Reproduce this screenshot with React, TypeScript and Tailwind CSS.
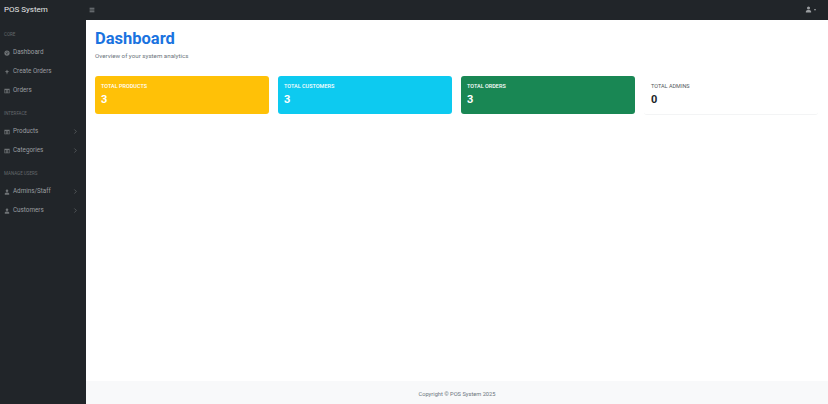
import { ChevronRight, Menu } from "lucide-react";

const font = "font-['Roboto','Noto_Sans',sans-serif]";

function Gauge() {
  return (
    <svg viewBox="0 0 16 16" className="h-[6px] w-[6px] fill-current">
      <path d="M8 1a7 7 0 1 0 0 14A7 7 0 0 0 8 1Zm0 2.5a1 1 0 1 1 0 2 1 1 0 0 1 0-2Zm-3 2a1 1 0 1 1 0 2 1 1 0 0 1 0-2Zm6 0a1 1 0 1 1 0 2 1 1 0 0 1 0-2ZM8 12a2 2 0 0 1-.6-3.9L9.5 6l.6.5-1.5 2.4A2 2 0 0 1 8 12Z" />
    </svg>
  );
}

function Tag() {
  return (
    <svg viewBox="0 0 16 16" className="h-[6px] w-[6px] fill-current">
      <path d="M8 1l1.8 4.2L14 7l-4.2 1.8L8 15 6.2 8.8 2 7l4.2-1.8L8 1Z" />
    </svg>
  );
}

function Table() {
  return (
    <svg viewBox="0 0 16 16" className="h-[6px] w-[6px] fill-current">
      <path d="M1 2h14v12H1V2Zm1.5 3v2.2h3.2V5H2.5Zm4.7 0v2.2h1.6V5H7.2Zm3.1 0v2.2h3.2V5h-3.2Zm-7.8 3.7V12h3.2V8.7H2.5Zm4.7 0V12h1.6V8.7H7.2Zm3.1 0V12h3.2V8.7h-3.2Z" />
    </svg>
  );
}

function User({ className }: { className: string }) {
  return (
    <svg viewBox="0 0 16 16" className={`fill-current ${className}`}>
      <path d="M8 8a3.5 3.5 0 1 0 0-7 3.5 3.5 0 0 0 0 7Zm-5 7c-.8 0-1.2-.5-1.2-1.2C1.8 11 4 9 6 9h4c2 0 4.2 2 4.2 4.8 0 .7-.4 1.2-1.2 1.2H3Z" />
    </svg>
  );
}

function NavItem({ icon, label, arrow }: { icon: React.ReactNode; label: string; arrow?: boolean }) {
  return (
    <div className="flex h-[19px] items-center pl-[4px] pr-[7px] text-[6.3px] text-[#9a9da0]">
      <span className="mr-[3px] flex w-[6px] justify-center text-[#6f7376]">{icon}</span>
      <span>{label}</span>
      {arrow && <ChevronRight className="ml-auto h-[7px] w-[7px] text-[#6f7376]" strokeWidth={2} />}
    </div>
  );
}

function Heading({ children }: { children: string }) {
  return (
    <div className="flex h-[22px] items-end pb-[5px] pl-[4px] text-[4.5px] uppercase leading-[6px] text-[#64686c]">
      {children}
    </div>
  );
}

function StatCard({ label, bg }: { label: string; bg: string }) {
  return (
    <div className={`h-[38px] rounded-[3px] px-[6px] pt-[6px] text-white ${bg}`}>
      <div className="text-[5.5px] font-medium uppercase leading-[8px]">{label}</div>
      <div className="mt-[3px] text-[11px] font-bold leading-[14px]">3</div>
    </div>
  );
}

export default function App() {
  return (
    <div className={`flex h-[404px] w-[828px] flex-col overflow-hidden bg-white ${font}`}>
      <header className="flex h-[20px] shrink-0 items-center bg-[#212529] pb-[1px] text-[#9a9da0]">
        <div className="w-[86px] pl-[4px] text-[8px] font-normal text-[#e4e5e6]">POS System</div>
        <Menu className="ml-[3px] h-[6px] w-[6px]" strokeWidth={3} />
        <div className="ml-auto mr-[12px] flex items-center gap-[2px]">
          <User className="h-[7px] w-[7px]" />
          <span className="h-0 w-0 border-x-[1.5px] border-t-[2px] border-x-transparent border-t-[#9a9da0]" />
        </div>
      </header>
      <div className="flex min-h-0 flex-1">
        <aside className="w-[86px] shrink-0 bg-[#212529] pt-[1px]">
          <Heading>Core</Heading>
          <NavItem icon={<Gauge />} label="Dashboard" />
          <NavItem icon={<Tag />} label="Create Orders" />
          <NavItem icon={<Table />} label="Orders" />
          <Heading>Interface</Heading>
          <NavItem icon={<Table />} label="Products" arrow />
          <NavItem icon={<Table />} label="Categories" arrow />
          <Heading>Manage Users</Heading>
          <NavItem icon={<User className="h-[6px] w-[6px]" />} label="Admins/Staff" arrow />
          <NavItem icon={<User className="h-[6px] w-[6px]" />} label="Customers" arrow />
        </aside>
        <div className="flex min-w-0 flex-1 flex-col">
          <main className="flex-1 pl-[9px] pr-[10px] pt-[8px]">
            <h1 className="text-[16.5px] font-bold leading-[22px] text-[#1a73e0]">Dashboard</h1>
            <p className="mt-[2px] text-[6.2px] leading-[9px] text-[#6c757d]">Overview of your system analytics</p>
            <div className="mt-[15px] grid grid-cols-4 gap-[9px]">
              <StatCard label="Total Products" bg="bg-[#ffc107]" />
              <StatCard label="Total Customers" bg="bg-[#0dcaf0]" />
              <StatCard label="Total Orders" bg="bg-[#198754]" />
              <div className="h-[39px] rounded-[3px] border-b border-[#f3f4f5] px-[7px] pt-[6px] text-[#212529]">
                <div className="text-[5.5px] uppercase leading-[8px] text-[#54595e]">Total Admins</div>
                <div className="mt-[3px] text-[11px] font-bold leading-[14px]">0</div>
              </div>
            </div>
          </main>
          <footer className="flex h-[23px] shrink-0 items-center justify-center bg-[#f8f9fa] pt-[3px] text-[5.7px] text-[#6c757d]">
            Copyright © POS System 2025
          </footer>
        </div>
      </div>
    </div>
  );
}
